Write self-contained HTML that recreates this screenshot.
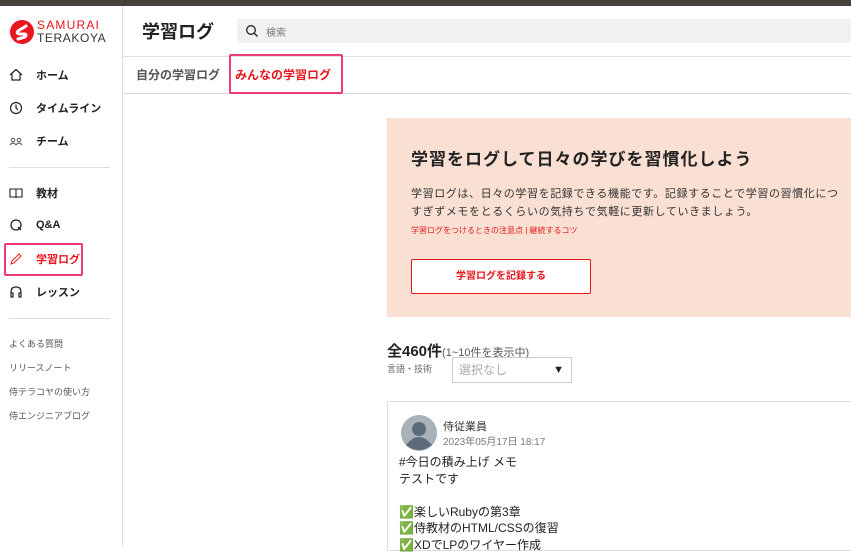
<!DOCTYPE html>
<html><head><meta charset="utf-8">
<style>
*{margin:0;padding:0;box-sizing:border-box}
body{width:851px;height:546px;overflow:hidden;background:#fff;font-family:"Liberation Sans","Noto Sans CJK JP",sans-serif;color:#222;position:relative}
.top{position:absolute;left:0;top:0;width:851px;height:6px;background:#45423a}
.side{position:absolute;left:0;top:6px;width:123px;height:540px;border-right:1px solid #ddd}
.logo{position:absolute;left:9px;top:13px}
.nav{position:absolute;left:9px;font-size:11px;font-weight:bold;display:flex;align-items:center}
.nav svg{width:14px;height:14px;margin-right:13px}
.hr{position:absolute;left:9px;width:101px;border-top:1px solid #ddd}
.sub{position:absolute;left:9px;font-size:9px;color:#555}
.hd{position:absolute;left:123px;top:6px;right:0;height:51px;border-bottom:1px solid #ddd}
.tabs{position:absolute;left:123px;top:57px;right:0;height:37px;border-bottom:1px solid #ddd}
.box{position:absolute;border:2px solid #f03a78;border-radius:2px}
</style></head><body>
<div class="top"></div>
<div class="side">
 <div class="logo">
  <svg width="26" height="26" viewBox="0 0 26 26" style="position:absolute;left:0;top:0"><circle cx="13" cy="13" r="12" fill="#e8161d"/><path d="M17 7 L9 12 Q7 14 10 15 L16 15 Q18 16 16 18 L9 20" stroke="#fff" stroke-width="3" fill="none" stroke-linecap="round"/></svg>
  <div style="position:absolute;left:28px;top:0px;font-size:12px;color:#e8161d;letter-spacing:1.2px;line-height:13px">SAMURAI</div>
  <div style="position:absolute;left:28px;top:13px;font-size:12px;color:#333;letter-spacing:.6px;line-height:13px">TERAKOYA</div>
 </div>
 <div class="nav" style="top:61px"><svg viewBox="0 0 14 14"><path d="M1 7 L7 1.5 L13 7 M3 6 V12 H11 V6" stroke="#222" fill="none" stroke-width="1.2"/></svg>ホーム</div>
 <div class="nav" style="top:94px"><svg viewBox="0 0 14 14"><circle cx="7" cy="7" r="5.5" stroke="#222" fill="none" stroke-width="1.2"/><path d="M7 3.5V7L9 9" stroke="#222" fill="none" stroke-width="1.2"/></svg>タイムライン</div>
 <div class="nav" style="top:127px"><svg viewBox="0 0 14 14"><circle cx="4" cy="6" r="1.8" stroke="#555" fill="none"/><circle cx="10" cy="6" r="1.8" stroke="#555" fill="none"/><path d="M1 11Q4 7 7 11M7 11Q10 7 13 11" stroke="#555" fill="none"/></svg>チーム</div>
 <div class="hr" style="top:161px"></div>
 <div class="nav" style="top:179px"><svg viewBox="0 0 14 14"><path d="M1 3H6Q7 3 7 4V12Q7 11 6 11H1ZM13 3H8Q7 3 7 4V12Q7 11 8 11H13Z" stroke="#222" fill="none" stroke-width="1.1"/></svg>教材</div>
 <div class="nav" style="top:212px"><svg viewBox="0 0 14 14"><circle cx="7" cy="7" r="5" stroke="#222" fill="none" stroke-width="1.3"/><path d="M9 9L12 12" stroke="#222" stroke-width="1.3"/></svg>Q&amp;A</div>
 <div class="nav" style="top:245px;color:#e8161d"><svg viewBox="0 0 14 14"><path d="M2 12L3 9L10 2L12 4L5 11Z" stroke="#e8161d" fill="none" stroke-width="1"/></svg>学習ログ</div>
 <div class="box" style="left:4px;top:237px;width:79px;height:33px"></div>
 <div class="nav" style="top:278px"><svg viewBox="0 0 14 14"><path d="M2 9V7Q2 2 7 2Q12 2 12 7V9M2 8H4V12H2ZM10 8H12V12H10Z" stroke="#222" fill="none" stroke-width="1.2"/></svg>レッスン</div>
 <div class="hr" style="top:312px"></div>
 <div class="sub" style="top:331px">よくある質問</div>
 <div class="sub" style="top:355px">リリースノート</div>
 <div class="sub" style="top:379px">侍テラコヤの使い方</div>
 <div class="sub" style="top:403px">侍エンジニアブログ</div>
</div>
<div class="hd">
 <div style="position:absolute;left:19px;top:12px;font-size:18px;font-weight:bold">学習ログ</div>
 <div style="position:absolute;left:114px;top:13px;right:0;height:24px;background:#f1f1f1">
  <svg width="14" height="14" viewBox="0 0 14 14" style="position:absolute;left:8px;top:5px"><circle cx="6" cy="6" r="4.3" stroke="#222" fill="none" stroke-width="1.3"/><path d="M9 9L12.5 12.5" stroke="#222" stroke-width="1.3"/></svg>
  <span style="position:absolute;left:29px;top:5px;font-size:10px;color:#777">検索</span>
 </div>
</div>
<div class="tabs">
 <div style="position:absolute;left:13px;top:9px;font-size:12px;color:#555;font-weight:bold">自分の学習ログ</div>
 <div style="position:absolute;left:112px;top:9px;font-size:12px;color:#e8161d;font-weight:bold">みんなの学習ログ</div>
</div>
<div class="box" style="left:229px;top:54px;width:114px;height:40px"></div>
<div style="position:absolute;left:387px;top:118px;width:464px;height:199px;background:#f9e0d3">
 <div style="position:absolute;left:24px;top:27px;font-size:17px;font-weight:bold;white-space:nowrap;letter-spacing:1px">学習をログして日々の学びを習慣化しよう</div>
 <div style="position:absolute;left:24px;top:67px;font-size:11px;color:#333;white-space:nowrap;line-height:18px;letter-spacing:.6px">学習ログは、日々の学習を記録できる機能です。記録することで学習の習慣化につ<br>すぎずメモをとるくらいの気持ちで気軽に更新していきましょう。</div>
 <div style="position:absolute;left:24px;top:107px;font-size:8px;color:#e8161d;white-space:nowrap">学習ログをつけるときの注意点 | 継続するコツ</div>
 <div style="position:absolute;left:24px;top:141px;width:180px;height:35px;background:#fff;border:1px solid #e8161d;border-radius:2px;text-align:center;line-height:33px;font-size:10px;font-weight:bold;color:#e8161d">学習ログを記録する</div>
</div>
<div style="position:absolute;left:387px;top:340px;font-size:15px;font-weight:bold;white-space:nowrap">全460件<span style="font-size:11px;font-weight:normal;color:#555">(1~10件を表示中)</span></div>
<div style="position:absolute;left:387px;top:362px;font-size:9px;color:#666">言語・技術</div>
<div style="position:absolute;left:452px;top:357px;width:120px;height:26px;border:1px solid #ccc;font-size:12px;color:#aaa;line-height:24px;padding-left:6px">選択なし<span style="position:absolute;right:7px;color:#222;font-size:11px">▼</span></div>
<div style="position:absolute;left:387px;top:401px;width:470px;height:150px;border:1px solid #ddd">
 <svg width="36" height="36" viewBox="0 0 36 36" style="position:absolute;left:13px;top:13px"><circle cx="18" cy="18" r="18" fill="#a9b1b9"/><circle cx="18" cy="14" r="7" fill="#5c6b79"/><path d="M5 30Q18 14 31 30Q18 40 5 30Z" fill="#5c6b79"/></svg>
 <div style="position:absolute;left:55px;top:16px;font-size:11px;color:#333">侍従業員</div>
 <div style="position:absolute;left:55px;top:31px;font-size:10px;color:#777">2023年05月17日 18:17</div>
 <div style="position:absolute;left:11px;top:52px;font-size:12px;color:#222;line-height:16.5px;white-space:nowrap">#今日の積み上げ メモ<br>テストです<br><br><span style="color:#3bb54a">✅</span>楽しいRubyの第3章<br><span style="color:#3bb54a">✅</span>侍教材のHTML/CSSの復習<br><span style="color:#3bb54a">✅</span>XDでLPのワイヤー作成</div>
</div>
</body></html>
